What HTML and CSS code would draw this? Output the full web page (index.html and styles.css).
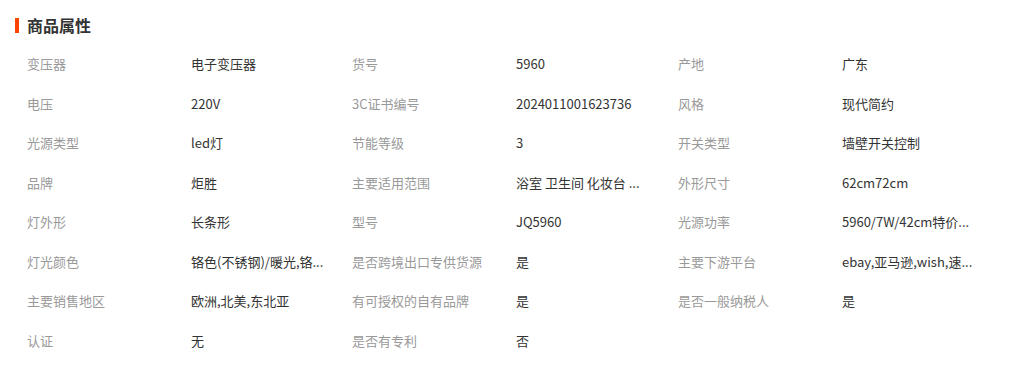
FILE: index.html
```html
<!DOCTYPE html>
<html lang="zh-CN">
<head>
<meta charset="utf-8">
<link rel="stylesheet" href="styles.css">
</head>
<body>
<div class="panel">
  <h2 class="title">商品属性</h2>
  <div class="attrs">
    <div class="k">变压器</div><div class="v">电子变压器</div>
    <div class="k">货号</div><div class="v">5960</div>
    <div class="k">产地</div><div class="v">广东</div>

    <div class="k">电压</div><div class="v">220V</div>
    <div class="k">3C证书编号</div><div class="v">2024011001623736</div>
    <div class="k">风格</div><div class="v">现代简约</div>

    <div class="k">光源类型</div><div class="v">led灯</div>
    <div class="k">节能等级</div><div class="v">3</div>
    <div class="k">开关类型</div><div class="v">墙壁开关控制</div>

    <div class="k">品牌</div><div class="v">炬胜</div>
    <div class="k">主要适用范围</div><div class="v">浴室 卫生间 化妆台 ...</div>
    <div class="k">外形尺寸</div><div class="v">62cm72cm</div>

    <div class="k">灯外形</div><div class="v">长条形</div>
    <div class="k">型号</div><div class="v">JQ5960</div>
    <div class="k">光源功率</div><div class="v">5960/7W/42cm特价...</div>

    <div class="k">灯光颜色</div><div class="v">铬色(不锈钢)/暖光,铬...</div>
    <div class="k">是否跨境出口专供货源</div><div class="v">是</div>
    <div class="k">主要下游平台</div><div class="v">ebay,亚马逊,wish,速...</div>

    <div class="k">主要销售地区</div><div class="v">欧洲,北美,东北亚</div>
    <div class="k">有可授权的自有品牌</div><div class="v">是</div>
    <div class="k">是否一般纳税人</div><div class="v">是</div>

    <div class="k">认证</div><div class="v">无</div>
    <div class="k">是否有专利</div><div class="v">否</div>
  </div>
</div>
</body>
</html>
```
FILE: styles.css
```css
html, body {
  margin: 0;
  padding: 0;
  background: #fff;
}
body {
  font-family: "Noto Sans CJK SC", "Microsoft YaHei", sans-serif;
  color: #333;
}
.panel {
  padding: 13px 0 0 15px;
}
.title {
  margin: 0;
  height: 24px;
  line-height: 24px;
  font-size: 16px;
  font-weight: bold;
  color: #333;
  display: flex;
  align-items: center;
  gap: 8px;
}
.title::before {
  content: "";
  display: block;
  width: 4px;
  height: 15px;
  background: #ff4400;
}
.attrs {
  margin: 7px 0 0 12px;
  display: grid;
  grid-template-columns: 164px 161px 164px 162px 164px 160px;
  grid-auto-rows: 39.5px;
  font-size: 13px;
  align-items: center;
}
.k {
  color: #999;
  white-space: nowrap;
}
.v {
  color: #333;
  white-space: nowrap;
}
```
